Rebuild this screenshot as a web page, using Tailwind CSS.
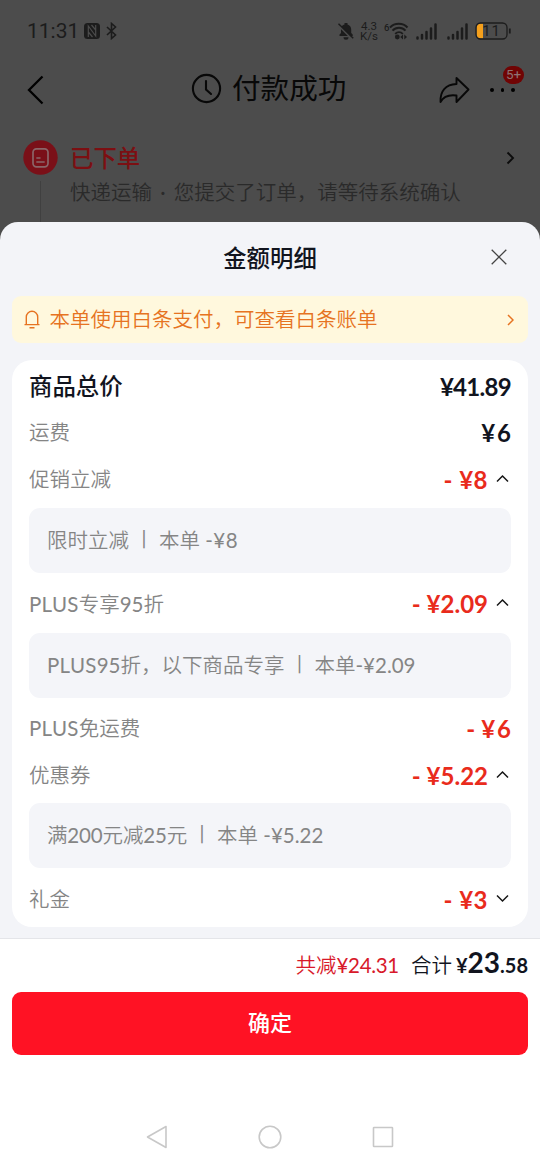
<!DOCTYPE html>
<html lang="zh-CN">
<head>
<meta charset="utf-8">
<title>付款成功</title>
<script src="https://cdn.jsdelivr.net/npm/@tailwindcss/browser@4"></script>
</head>
<body class="w-[540px] h-[1165px] overflow-hidden bg-[#4c4c4c] font-['Lato','Noto_Sans_CJK_SC',sans-serif] whitespace-nowrap">
<div class="flex flex-col h-[1165px]">

  <!-- Dimmed order page -->
  <div class="h-[222px] shrink-0 flex flex-col">
    <div class="h-[62px] shrink-0 pl-[27px] pr-[28px] flex items-center text-[#1c1c1c]">
      <span class="w-[56px] font-['Roboto'] text-[21px] leading-6">11:31</span>
      <svg class="ml-px" width="16" height="16" viewBox="0 0 16 16"><rect x="0" y="0" width="16" height="16" rx="3.5" fill="#1c1c1c"/><path d="M4.300 14V3L11.700 13V2M7.500 2L11.700 7M4.300 9L8.500 14" fill="none" stroke="#4c4c4c" stroke-width="1.200"/></svg>
      <svg class="ml-[6px]" width="11" height="18" viewBox="0 0 11 18" fill="none" stroke="#1c1c1c" stroke-width="1.600"><path d="M1 5L9.500 13L5.500 16.500V1.500L9.500 5L1 13"/></svg>
      <svg class="ml-auto" width="16" height="18" viewBox="0 0 16 18"><path d="M1.500 14V12.500L3 11V7.500C3 4.500 4.500 3 6.500 2.500V1H9.500V2.500C11.700 3 13.200 5 13.200 7.500V11L14.700 12.500V14ZM5.500 15.300H10.500A2.500 2.500 0 0 1 5.500 15.300" fill="#1c1c1c"/><path d="M.3 3.200L15 17.700" stroke="#4c4c4c" stroke-width="2"/><path d="M.5 1.700L15.200 16.200" stroke="#1c1c1c" stroke-width="1.500"/></svg>
      <div class="ml-[6px] w-[18px] flex flex-col items-center font-['Roboto'] text-[11.500px] leading-[10px]"><span>4.3</span><span>K/s</span></div>
      <svg class="ml-[6px]" width="25" height="18" viewBox="0 0 25 18" fill="none" stroke="#1c1c1c" stroke-width="1.900"><text x="0" y="8.500" font-family="Roboto" font-size="9.500" font-weight="500" fill="#1c1c1c" stroke="none">6</text><path d="M6 5.500C10.500.500 19 .500 23.500 5.500M8.500 8.700C12 4.700 18 4.700 21.500 8.700M11.200 11.800C13.500 9.500 16.500 9.500 18.800 11.800"/><circle cx="13.300" cy="15" r="2.400" fill="#1c1c1c" stroke="none"/><path d="M19 12.500L16.300 15L19 17.500ZM20.300 12.500L23 15L20.300 17.500Z" fill="#1c1c1c" stroke="none"/></svg>
      <svg class="ml-[7px]" width="22" height="17" viewBox="0 0 22 17" stroke="#1c1c1c" stroke-width="2.500" stroke-linecap="round"><path d="M1.500 14.500V15.500M6 12V15.500M10.500 9V15.500M15 5.500V15.500M19.500 1.500V15.500"/></svg>
      <svg class="ml-[9px]" width="22" height="17" viewBox="0 0 22 17" stroke="#1c1c1c" stroke-width="2.500" stroke-linecap="round"><path d="M1.500 14.500V15.500M6 12V15.500M10.500 9V15.500M15 5.500V15.500M19.500 1.500V15.500"/></svg>
      <svg class="ml-[6px] mr-px" width="36" height="18" viewBox="0 0 36 18"><path d="M8 1.500H6A4.500 4.500 0 0 0 1.500 6V12A4.500 4.500 0 0 0 6 16.500H8Z" fill="#f5a01c"/><rect x="1" y="1" width="31" height="16" rx="4.500" fill="none" stroke="#1c1c1c" stroke-width="1.300"/><path d="M34.800 6.500V11.500" stroke="#1c1c1c" stroke-width="1.800"/><text x="16.500" y="14.200" font-family="Roboto" font-size="15" letter-spacing=".8" text-anchor="middle" fill="#1c1c1c">11</text></svg>
    </div>

    <div class="h-[56px] shrink-0 pl-[27px] flex items-center">
      <svg width="17" height="30" viewBox="0 0 17 30" fill="none" stroke="#000" stroke-width="2.300"><path d="M15.500 1.500L2 15L15.500 28.500"/></svg>
      <svg class="ml-[147px] -mt-[3px]" width="31" height="31" viewBox="0 0 31 31" fill="none" stroke="#080808" stroke-width="2.100"><circle cx="15.500" cy="15.500" r="13.600"/><path d="M15 8V16.500L20 21" stroke-linecap="round"/></svg>
      <h1 class="ml-[10px] -mt-[5px] w-[115px] text-[28.600px] leading-[40px] font-normal text-[#080808]">付款成功</h1>
      <svg class="ml-[92px] -mt-px" width="31" height="28" viewBox="0 0 31 28" fill="none" stroke="#080808" stroke-width="1.900" stroke-linejoin="round"><path d="M17.500 2L29.500 13.500L17.500 26V19.500C10 18.500 4.500 20.500 1.500 26C1 15 6.500 8.500 17.500 8Z"/></svg>
      <div class="relative ml-[20px] flex gap-[7px]">
        <i class="size-[3.500px] rounded-full bg-black"></i><i class="size-[3.500px] rounded-full bg-black"></i><i class="size-[3.500px] rounded-full bg-black"></i>
        <span class="absolute left-[13px] -top-[22px] w-[21px] h-[18px] rounded-full bg-[#700404] text-[#8f7373] text-[13.500px] leading-[17px] text-center font-['Roboto']">5+</span>
      </div>
    </div>

    <div class="pt-[22px] pl-[23px] flex">
      <div class="w-[35px] flex flex-col items-center">
        <svg class="shrink-0" width="35" height="35" viewBox="0 0 35 35"><circle cx="17.500" cy="17.500" r="17.200" fill="#7a1018"/><rect x="10" y="8.800" width="15" height="18" rx="3.500" fill="none" stroke="#8a6568" stroke-width="1.700"/><path d="M13.300 18H17.500M13.300 22H21.700" stroke="#8a6568" stroke-width="1.700"/></svg>
        <i class="mt-[6px] w-px h-[41px] shrink-0 bg-[#404040]"></i>
      </div>
      <div class="ml-[12px] flex-1">
        <div class="h-[35px] flex items-center">
          <span class="text-[23.400px] leading-[34px] font-medium text-[#7c0f12]">已下单</span>
          <svg class="ml-auto mr-[25px]" width="9" height="14" viewBox="0 0 9 14" fill="none" stroke="#0c0c0c" stroke-width="1.900"><path d="M1.500 1.500L7 7L1.500 12.500"/></svg>
        </div>
        <p class="mt-px text-[20.500px] leading-[32px] text-[#2a2a2a] [word-spacing:3px] font-['Lato','Noto_Sans_CJK_SC_DemiLight','Noto_Sans_CJK_SC',sans-serif]">快递运输 · 您提交了订单，请等待系统确认</p>
      </div>
    </div>
  </div>

  <!-- Amount sheet -->
  <section class="flex-1 rounded-t-[18px] bg-[#f3f4f8] flex flex-col overflow-hidden">
    <header class="h-[74px] relative flex items-center justify-center">
      <h2 class="-mt-[2px] text-[23.400px] leading-[34px] font-medium text-[#11141e]">金额明细</h2>
      <svg class="absolute right-[33px] top-[27px]" width="16" height="16" viewBox="0 0 16 16" stroke="#444" stroke-width="1.300"><path d="M.7.700L15.300 15.300M15.300.700L.7 15.300"/></svg>
    </header>
    <div class="mx-[12px] h-[47px] rounded-[9px] bg-[#fff8dd] pl-[12px] pr-[14px] flex items-center text-[#e67321]">
      <svg width="16" height="19" viewBox="0 0 16 19" fill="none" stroke="#e67321" stroke-width="1.400"><path d="M2.300 14.500V7A5.700 5.700 0 0 1 13.700 7V14.500M.5 14.600H15.500M5.500 17.700H10.500"/></svg>
      <span class="ml-[9.500px] -mt-px text-[20.500px] leading-[30px] font-['Lato','Noto_Sans_CJK_SC_DemiLight','Noto_Sans_CJK_SC',sans-serif]">本单使用白条支付，可查看白条账单</span>
      <svg class="ml-auto" width="7" height="12" viewBox="0 0 7 12" fill="none" stroke="#e67321" stroke-width="1.500"><path d="M1 1L6 6L1 11"/></svg>
    </div>

    <div class="mt-[17px] mx-[12px] h-[567px] shrink-0 rounded-[20px] bg-white pt-[3px] px-[17px] text-[20.500px] text-[#858585] font-['Lato','Noto_Sans_CJK_SC_DemiLight','Noto_Sans_CJK_SC',sans-serif]">
      <div class="h-[46px] flex items-center justify-between text-[#11141e]"><span class="text-[23.400px] font-medium font-['Noto_Sans_CJK_SC',sans-serif]">商品总价</span><b class="text-[24px] pt-[2px] tracking-[-0.7px]">¥41.89</b></div>
      <div class="h-[47px] flex items-center justify-between"><span>运费</span><b class="text-[24px] pt-px text-[#11141e]"><span class="tracking-[2px]">¥</span>6</b></div>
      <div class="h-[47px] flex items-center justify-between"><span>促销立减</span><span class="flex items-center text-[#e92b1c]"><b class="text-[24px] tracking-[.5px]">- ¥8</b><svg class="ml-[8px] mr-[2px] -mt-[3px]" width="13" height="9" viewBox="0 0 13 9" fill="none" stroke="#161616" stroke-width="1.500"><path d="M1 7.500L6.500 2L12 7.500"/></svg></span></div>
      <div class="mt-[5px] mb-[8px] h-[65px] rounded-[11px] bg-[#f4f5f9] px-[18px] pb-px flex items-center"><span>限时立减</span><span class="w-[30px] text-center text-[20px] pb-[2px]">丨</span><span>本单 <span class="tracking-[.5px]">-¥8</span></span></div>
      <div class="h-[47px] pb-px flex items-center justify-between"><span><span class="tracking-[.3px]">PLUS</span>专享95折</span><span class="flex items-center text-[#e92b1c]"><b class="text-[24px]">- ¥2.09</b><svg class="ml-[8px] mr-[2px] -mt-[3px]" width="13" height="9" viewBox="0 0 13 9" fill="none" stroke="#161616" stroke-width="1.500"><path d="M1 7.500L6.500 2L12 7.500"/></svg></span></div>
      <div class="mt-[5px] mb-[7px] h-[65px] rounded-[11px] bg-[#f4f5f9] px-[18px] pb-px flex items-center"><span><span class="tracking-[.3px]">PLUS</span>95折，以下商品专享</span><span class="w-[30px] text-center text-[20px] pb-[2px]">丨</span><span>本单-¥2.09</span></div>
      <div class="h-[47px] flex items-center justify-between"><span><span class="tracking-[.3px]">PLUS</span>免运费</span><b class="text-[24px] text-[#e92b1c]">- <span class="tracking-[2px]">¥</span>6</b></div>
      <div class="h-[47px] flex items-center justify-between"><span>优惠券</span><span class="flex items-center text-[#e92b1c]"><b class="text-[24px]">- ¥5.22</b><svg class="ml-[8px] mr-[2px] -mt-[3px]" width="13" height="9" viewBox="0 0 13 9" fill="none" stroke="#161616" stroke-width="1.500"><path d="M1 7.500L6.500 2L12 7.500"/></svg></span></div>
      <div class="mt-[4px] mb-[8px] h-[65px] rounded-[11px] bg-[#f4f5f9] px-[18px] pb-px flex items-center"><span class="tracking-[-0.15px]">满200元减25元</span><span class="w-[30px] text-center text-[20px] pb-[2px]">丨</span><span>本单 -¥5.22</span></div>
      <div class="h-[47px] flex items-center justify-between"><span>礼金</span><span class="flex items-center text-[#e92b1c]"><b class="text-[24px] tracking-[.5px]">- ¥3</b><svg class="ml-[8px] mr-[2px] -mt-[3px]" width="13" height="9" viewBox="0 0 13 9" fill="none" stroke="#161616" stroke-width="1.500"><path d="M1 1.500L6.500 7L12 1.500"/></svg></span></div>
    </div>

    <footer class="mt-[11px] flex-1 border-t border-[#e4e5e9] bg-white flex flex-col px-[12px]">
      <div class="h-[53px] flex items-baseline justify-end pt-[6px] text-[20.500px] leading-[34px] text-[#11141e] font-['Lato','Noto_Sans_CJK_SC_DemiLight','Noto_Sans_CJK_SC',sans-serif]">
        <span class="text-[#d8192a]">共减<span class="tracking-[-0.3px]">¥24.31</span></span>
        <span class="ml-[12px]">合计</span>
        <b class="ml-[4px] text-[20px]">¥</b><b class="text-[28px]">23</b><b class="text-[20px]">.58</b>
      </div>
      <button class="h-[63px] shrink-0 rounded-[9px] bg-[#ff1224] text-white text-[22px] font-medium pb-[3px]">确定</button>
      <nav class="mt-[70px] flex items-center justify-between pl-[134px] pr-[134px]">
        <svg width="22" height="24" viewBox="0 0 22 24" fill="none" stroke="#c8c8c8" stroke-width="1.600" stroke-linejoin="round"><path d="M20 1.500V22.500L1.500 12Z"/></svg>
        <svg width="24" height="24" viewBox="0 0 24 24" fill="none" stroke="#c8c8c8" stroke-width="1.600"><circle cx="12" cy="12" r="10.800"/></svg>
        <svg width="22" height="22" viewBox="0 0 22 22" fill="none" stroke="#c8c8c8" stroke-width="1.600"><rect x="1.500" y="1.500" width="19" height="19" rx=".5"/></svg>
      </nav>
    </footer>
  </section>
</div>
</body>
</html>
